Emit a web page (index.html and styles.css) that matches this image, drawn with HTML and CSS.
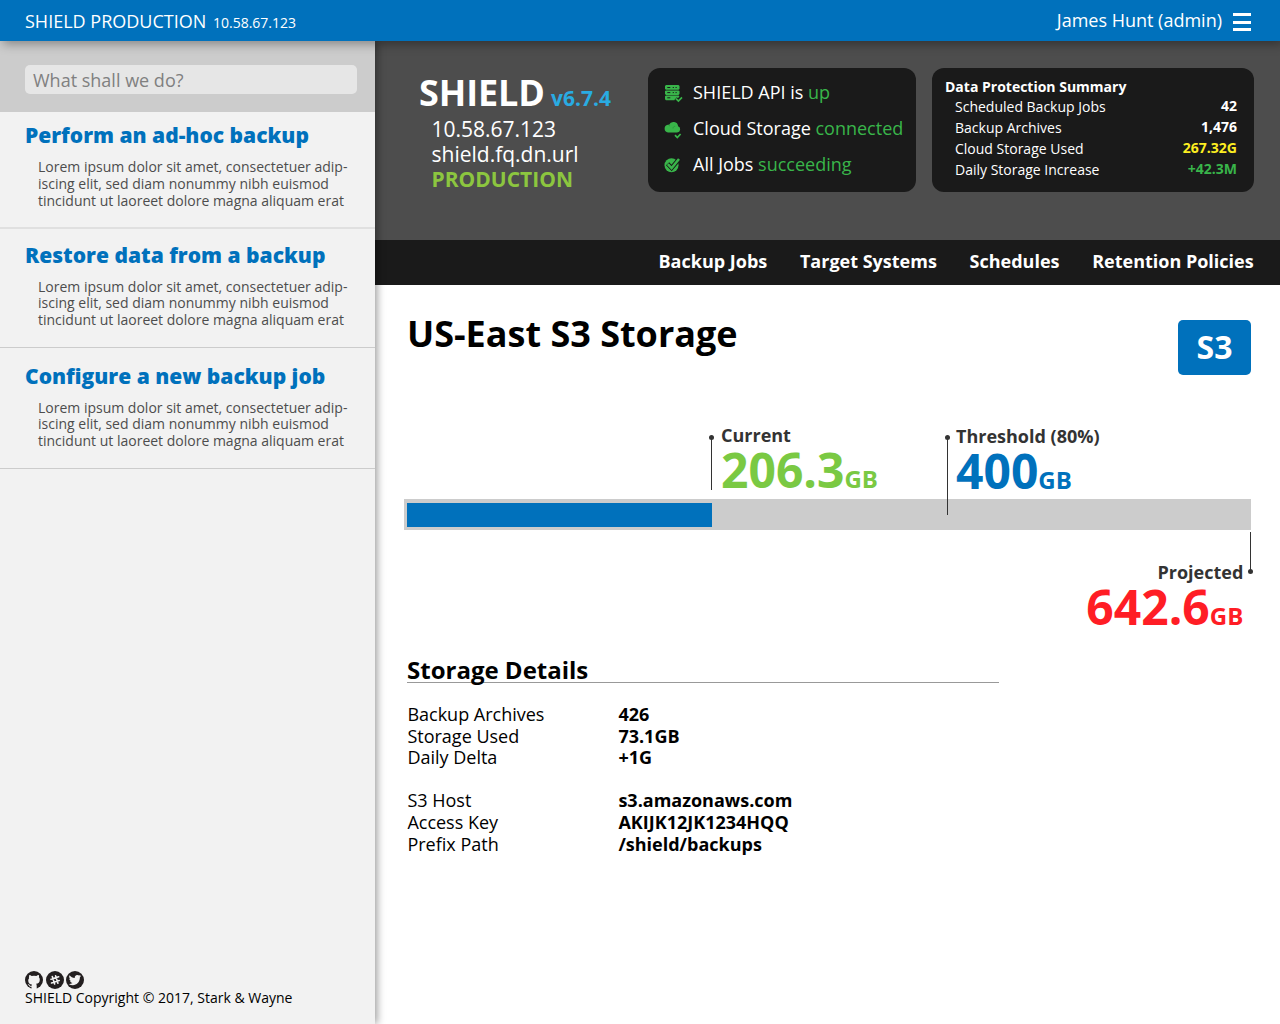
FILE: index.html
```html
<!DOCTYPE html>
<html lang="en">
<head>
<meta charset="utf-8">
<title>SHIELD</title>
<link rel="stylesheet" href="styles.css">
</head>
<body>
<header class="topbar">
  <div class="env">SHIELD PRODUCTION <span class="env-ip">10.58.67.123</span></div>
  <div class="user">James Hunt (admin)</div>
  <div class="burger"><i></i><i></i><i></i></div>
</header>
<div class="shell">
  <aside class="sidebar">
    <div class="search"><div class="search-box">What shall we do?</div></div>
    <section class="task task-first">
      <h2>Perform an ad-hoc backup</h2>
      <p>Lorem ipsum dolor sit amet, consectetuer adip-<br>iscing elit, sed diam nonummy nibh euismod<br>tincidunt ut laoreet dolore magna aliquam erat</p>
    </section>
    <section class="task task-second">
      <h2>Restore data from a backup</h2>
      <p>Lorem ipsum dolor sit amet, consectetuer adip-<br>iscing elit, sed diam nonummy nibh euismod<br>tincidunt ut laoreet dolore magna aliquam erat</p>
    </section>
    <section class="task task-third">
      <h2>Configure a new backup job</h2>
      <p>Lorem ipsum dolor sit amet, consectetuer adip-<br>iscing elit, sed diam nonummy nibh euismod<br>tincidunt ut laoreet dolore magna aliquam erat</p>
    </section>
    <footer class="foot">
      <div class="social">
        <svg width="18" height="18" viewBox="0 0 18 18"><circle cx="9" cy="9" r="9" fill="#231f20"/><path d="M4.200 4c1 0 1.800.5 2.400 1a9 9 0 0 1 4.800 0c.6-.5 1.400-1 2.400-1 .4.900.3 1.800.1 2.300.6.700.9 1.400.9 2.400 0 2.700-1.500 3.700-3.700 4 .4.400.6 1 .6 1.700V18H6.500v-2.200c-1.700.3-2.200-.7-2.700-1.500-.3-.4-.7-.6-1-.9.900-.3 1.500.2 2 .9.500.7.900.8 1.700.6 0-.6.200-1 .5-1.300-2.200-.3-3.800-1.300-3.800-4 0-1 .3-1.700.9-2.400-.2-.5-.3-1.400.1-2.300z" fill="#f2f2f2"/></svg>
        <svg width="18" height="18" viewBox="0 0 18 18"><circle cx="9" cy="9" r="9" fill="#231f20"/><path d="M6.300 5.500l2.300 7.500M9.600 4.700l2.300 7.500M5 8.200l7.700-2.500M5.500 12l7.700-2.500" stroke="#f2f2f2" stroke-width="1.600" stroke-linecap="round"/></svg>
        <svg width="18" height="18" viewBox="0 0 18 18"><circle cx="9" cy="9" r="9" fill="#231f20"/><path d="M15 4.900c-.4.200-.9.400-1.400.4.500-.3.900-.8 1.100-1.300-.5.300-1 .5-1.600.6a2.700 2.700 0 0 0-4.400 2.500C6.700 7 4.700 5.900 3.500 4.300c-.7 1.100-.3 2.800.8 3.500-.4 0-.8-.1-1.100-.3 0 1.200.8 2.200 2 2.500-.4.100-.7.100-1.100 0 .3 1.100 1.200 1.800 2.400 1.900-1.100.9-2.400 1.200-3.800 1.100 5 3 11.200.2 11.200-6.700.5-.3.900-.8 1.100-1.400z" fill="#f2f2f2"/></svg>
      </div>
      <div class="copy">SHIELD Copyright © 2017, Stark &amp; Wayne</div>
    </footer>
  </aside>
  <main class="main">
    <div class="hero">
      <div class="ident">
        <div class="brand">SHIELD <span class="version">v6.7.4</span></div>
        <div class="host">10.58.67.123</div>
        <div class="host host-name">shield.fq.dn.url</div>
        <div class="host host-env">PRODUCTION</div>
      </div>
      <div class="panel status">
        <div class="status-row">
          <svg width="20" height="20" viewBox="0 0 20 20"><path fill="#39b54a" d="M3 1h12.500l1 1v3l-1 .8H3L2 5V2zM3 6.400h12.500l1 .7v3l-1 .8H3l-1-.8v-3zM3 11.500h12.500l1 .8v.7l-3 3.300H3l-1-1v-3z"/><path d="M4.300 3.500h3M9.700 3.500h1.200M12.500 3.500h1.200M4.300 8.600h3M9.700 8.600h1.200M12.500 8.600h1.200M4.300 13.800h3" stroke="#1a1a1a"/><path d="M12.500 14.700l2.600 2.300 4-4.300" stroke="#1a1a1a" stroke-width="4" fill="none"/><path d="M13 14.600l2.400 2.400 3.600-3.600" stroke="#39b54a" stroke-width="1.700" fill="none"/></svg>
          <span>SHIELD API is <b class="ok">up</b></span>
        </div>
        <div class="status-row">
          <svg width="20" height="20" viewBox="0 0 20 20"><path fill="#39b54a" d="M5 12.500a3.900 3.900 0 0 1-.2-7.700h1.300a4.700 4.700 0 0 1 9 1.500 3.200 3.200 0 0 1-1 6.200z"/><path d="M7 6l-1.500-1M10 8.500c0-1.500 1-2.200 2.200-2.200" stroke="#249136" stroke-width=".7" fill="none"/><path d="M12 15.200l2.300 2.300 3.300-3.500" stroke="#39b54a" stroke-width="1.700" fill="none"/></svg>
          <span>Cloud Storage <b class="ok">connected</b></span>
        </div>
        <div class="status-row">
          <svg width="20" height="20" viewBox="0 0 20 20"><circle cx="8.500" cy="9.200" r="7" fill="#39b54a"/><path d="M4.600 7.800l4 4.200 8-9.500" stroke="#1a1a1a" stroke-width="4.400" fill="none"/><path d="M4.800 8.100l3.800 4L16 3" stroke="#39b54a" stroke-width="2.500" fill="none"/></svg>
          <span>All Jobs <b class="ok">succeeding</b></span>
        </div>
      </div>
      <div class="panel summary">
        <h3>Data Protection Summary</h3>
        <div class="sum-row"><span>Scheduled Backup Jobs</span><b>42</b></div>
        <div class="sum-row"><span>Backup Archives</span><b>1,476</b></div>
        <div class="sum-row"><span>Cloud Storage Used</span><b class="warn">267.32G</b></div>
        <div class="sum-row"><span>Daily Storage Increase</span><b class="ok">+42.3M</b></div>
      </div>
    </div>
    <nav class="nav"><a>Backup Jobs</a><a>Target Systems</a><a>Schedules</a><a>Retention Policies</a></nav>
    <div class="content">
      <div class="title-row"><h1>US-East S3 Storage</h1><div class="badge">S3</div></div>
      <div class="gauge">
        <div class="bar"><div class="fill"></div></div>
        <div class="mark mark-current"><div class="label">Current</div><div class="amount">206.3<small>GB</small></div></div>
        <div class="mark mark-threshold"><div class="label">Threshold (80%)</div><div class="amount">400<small>GB</small></div></div>
        <div class="mark mark-projected"><div class="label">Projected</div><div class="amount">642.6<small>GB</small></div></div>
      </div>
      <section class="details">
        <h2>Storage Details</h2>
        <dl>
          <dt>Backup Archives</dt><dd>426</dd>
          <dt>Storage Used</dt><dd>73.1GB</dd>
          <dt>Daily Delta</dt><dd>+1G</dd>
        </dl>
        <dl>
          <dt>S3 Host</dt><dd>s3.amazonaws.com</dd>
          <dt>Access Key</dt><dd>AKIJK12JK1234HQQ</dd>
          <dt>Prefix Path</dt><dd>/shield/backups</dd>
        </dl>
      </section>
    </div>
  </main>
</div>
</body>
</html>
```
FILE: styles.css
```css
* { box-sizing: border-box; }
body { margin: 0; width: 1280px; height: 1024px; overflow: hidden; font-family: "Open Sans", "Noto Sans", sans-serif; font-size: 18px; color: #000; background: #fff; }
h1, h2, h3, p, dl, dd { margin: 0; }

.topbar { position: relative; z-index: 3; height: 41px; display: flex; padding: 0 29px 0 25px; background: #0071bc; color: #fff; box-shadow: 3px 3px 10px rgba(0,0,0,.35); line-height: 42px; }
.env-ip { font-size: 14px; margin-left: 2px; }
.user { margin-left: auto; line-height: 40px; }
.burger { width: 18px; margin: 13px 0 0 11px; display: flex; flex-direction: column; gap: 4.500px; }
.burger i { height: 3px; background: #fff; }

.shell { display: flex; height: 983px; }
.sidebar { position: relative; z-index: 2; width: 375px; flex: none; display: flex; flex-direction: column; background: #f2f2f2; box-shadow: 2px 0 8px rgba(0,0,0,.4); }
.search { height: 71px; padding: 24px 18px 0 25px; background: #ccc; }
.search-box { height: 29px; border-radius: 5px; background: #e6e6e6; color: #808080; padding-left: 8px; line-height: 30px; }
.task { padding: 12px 0 0 25px; border-bottom: 1px solid #ccc; }
.task h2 { font-size: 21px; font-weight: 800; line-height: 30px; color: #0071bc; margin-top: -4px; white-space: nowrap; }
.task p { padding: 9px 0 0 13px; font-size: 14px; line-height: 16.800px; color: #4d4d4d; white-space: nowrap; }
.task-first { height: 117px; border-bottom: 2px solid #e0e0e0; }
.task-second { height: 119px; padding-top: 15px; }
.task-third { height: 121px; padding-top: 17px; }
.task-second p, .task-third p { padding-top: 8.600px; }
.foot { margin-top: auto; padding: 0 0 16px 25px; }
.social { display: flex; gap: 2.500px; height: 17.500px; }
.social svg { flex: none; }
.copy { font-size: 14px; line-height: 20px; margin-top: -0.500px; }

.main { flex: 1; }
.hero { height: 199px; background: #4d4d4d; display: flex; padding: 27px 26px 0 44px; color: #fff; }
.ident { width: 229px; }
.brand { font-size: 36px; font-weight: 700; line-height: 49px; height: 49px; white-space: nowrap; letter-spacing: -0.100px; }
.version { font-size: 21px; line-height: 1; letter-spacing: 0; color: #29abe2; margin-left: -3px; }
.host { font-size: 21px; line-height: 25px; padding-left: 12.500px; }
.host-env { font-weight: 700; color: #8cc63f; }
.panel { height: 124px; border-radius: 12px; background: #1a1a1a; }
.status { width: 268px; padding: 6px 0 0 15px; margin-right: 16px; }
.status-row { display: flex; align-items: center; gap: 10px; height: 36px; white-space: nowrap; }
.status-row svg { position: relative; top: 2px; }
.ok { color: #39b54a; }
.status .ok { font-weight: 400; }
.warn { color: #fcee21; }
.summary { width: 322px; padding: 9px 17px 0 13px; font-size: 14px; }
.summary h3 { font-size: 14px; line-height: 20px; height: 19px; }
.sum-row { display: flex; justify-content: space-between; line-height: 21px; padding-left: 10px; }
.sum-row b { margin-top: -1px; height: 21px; }
.nav { height: 45px; background: #1a1a1a; color: #fff; font-weight: 700; display: flex; justify-content: flex-end; gap: 32.700px; padding-right: 26.300px; line-height: 43px; }

.content { padding: 0 29px; }
.title-row { display: flex; justify-content: space-between; padding: 24px 0 0 3px; height: 91px; }
h1 { font-size: 36px; line-height: 49px; }
.badge { margin-top: 11px; width: 73px; height: 55px; border-radius: 5px; background: #0071bc; color: #fff; font-size: 32px; font-weight: 700; line-height: 53px; text-align: center; }
.gauge { position: relative; height: 278px; padding-top: 123px; }
.bar { height: 31px; background: #ccc; padding: 4px 3px; }
.fill { width: 305px; height: 24px; background: #0071bc; }
.mark { position: absolute; white-space: nowrap; font-weight: 700; }
.mark::before { content: ""; position: absolute; width: 1px; background: #333; }
.mark::after { content: ""; position: absolute; width: 5px; height: 5px; border-radius: 50%; background: #333; }
.mark-current { left: 317px; top: 47px; }
.mark-current::before { left: -10px; top: 14px; height: 53px; }
.mark-current::after { left: -12px; top: 11.500px; }
.mark-threshold { left: 552px; top: 48px; }
.mark-threshold::before { left: -9px; top: 13px; height: 78px; }
.mark-threshold::after { left: -11px; top: 10.500px; }
.mark-projected { right: 7.700px; top: 184px; text-align: right; }
.mark-projected::before { right: -8px; top: -28px; height: 39px; }
.mark-projected::after { right: -10px; top: 9px; }
.label { color: #333; line-height: 25px; }
.amount { font-size: 48px; line-height: 44px; color: #7ac943; }
.amount small { font-size: 24px; }
.mark-threshold .amount { color: #0071bc; }
.mark-projected .amount { color: #ff1d25; }

.details { padding-left: 3px; }
.details h2 { font-size: 24px; line-height: 31px; width: 592px; height: 29px; border-bottom: 1px solid #999; }
.details dl { display: grid; grid-template-columns: 211px 1fr; line-height: 21.700px; padding: 21px 0 0 0.400px; }
.details dd { font-weight: 700; }
```
